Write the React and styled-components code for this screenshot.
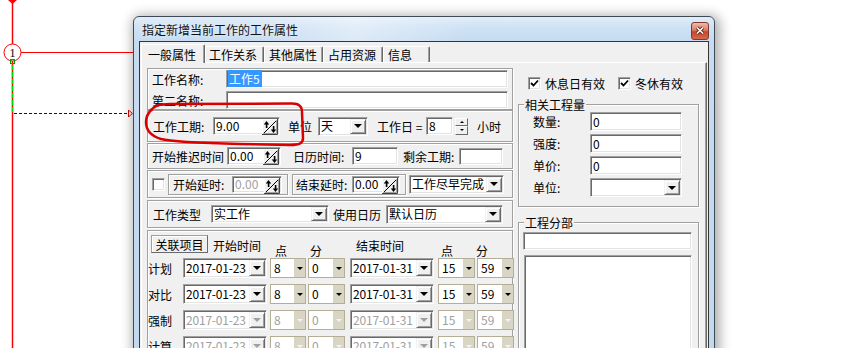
import React from 'react'
import styled, { createGlobalStyle } from 'styled-components'

const GlobalStyle = createGlobalStyle`
  body {
    margin: 0;
    background: #fff;
    overflow: hidden;
  }
  * {
    box-sizing: border-box;
  }
`

const Desktop = styled.div`
  position: relative;
  width: 847px;
  height: 348px;
  overflow: hidden;
  background: #fff;
  font-family: "Noto Sans CJK SC", "Noto Sans", sans-serif;
  font-size: 12px;
  color: #000;
`

const Canvas = styled.svg`
  position: absolute;
  left: 0;
  top: 0;
  z-index: ${p => p.$z};
  pointer-events: none;
`

const Window = styled.div`
  position: absolute;
  left: 133px;
  top: 16px;
  width: 582px;
  height: 360px;
  z-index: 2;
  display: flex;
  flex-direction: column;
  padding: 0 5px;
  border: 1px solid #3f4a57;
  border-radius: 6px 6px 0 0;
  background: linear-gradient(to bottom, #e2edf9 0px, #cfe2f5 10px, #c6dbf1 24px, #c2d8ef 100%);
  box-shadow: 2px 2px 12px 3px rgba(0, 0, 0, 0.32);
`

const TitleBar = styled.div`
  height: 24px;
  display: flex;
  align-items: center;
  justify-content: space-between;
  padding-left: 3px;
  background: linear-gradient(100deg, transparent 20%, rgba(255, 255, 255, 0.4) 38%, transparent 58%);
`

const TitleText = styled.span`
  line-height: 15px;
  color: #111;
  text-shadow: 0 0 5px rgba(255, 255, 255, 0.9);
`

const CloseBtn = styled.div`
  width: 18px;
  height: 18px;
  margin-top: 3px;
  border: 1px solid #7e3a2c;
  border-radius: 3px;
  background: linear-gradient(to bottom, #eeb9aa 0%, #dc7c64 45%, #c8452b 55%, #d56a4c 100%);
  display: flex;
  align-items: center;
  justify-content: center;
`

const Client = styled.div`
  flex: 1;
  display: flex;
  flex-direction: column;
  padding: 2px 1px 0;
  border: 1px solid #353535;
  background: #f0f0f0;
`

const TabStrip = styled.div`
  height: 18px;
  display: flex;
  align-items: flex-end;
`

const Tab = styled.div`
  position: relative;
  z-index: ${p => (p.$active ? 3 : 1)};
  width: ${p => p.$w}px;
  height: ${p => (p.$active ? 19 : 16)}px;
  margin-bottom: ${p => (p.$active ? -1 : 0)}px;
  padding-left: ${p => p.$pl}px;
  display: flex;
  align-items: center;
  line-height: 15px;
  background: #f0f0f0;
  border: 1px solid;
  border-bottom: none;
  border-color: #fff #696969 transparent #fff;
  box-shadow: inset -1px 0 0 #a0a0a0;
  border-radius: 2px 2px 0 0;
`

const Panel = styled.div`
  position: relative;
  z-index: 2;
  flex: 1;
  display: flex;
  gap: 5px;
  padding: 5px 0 0 5px;
  border-top: 1px solid #fff;
  border-left: 1px solid #fff;
  border-right: 1px solid #696969;
  box-shadow: inset -1px 0 0 #a0a0a0;
`

const LeftCol = styled.div`
  width: 366px;
  display: flex;
  flex-direction: column;
`

const RightCol = styled.div`
  width: 181px;
  display: flex;
  flex-direction: column;
`

const Box = styled.div`
  flex-shrink: 0;
  height: ${p => (p.$h ? p.$h + 'px' : 'auto')};
  flex-grow: ${p => (p.$grow ? 1 : 0)};
  margin-bottom: ${p => p.$mb || 0}px;
  padding: ${p => p.$pad || '0 0 0 5px'};
  display: flex;
  flex-direction: ${p => (p.$col ? 'column' : 'row')};
  align-items: ${p => (p.$col ? 'stretch' : 'center')};
  gap: ${p => p.$gap || 0}px;
  border: 1px solid #a0a0a0;
  box-shadow: inset 1px 1px 0 #fff, 1px 1px 0 #fff;
`

const SubBox = styled.div`
  flex-shrink: 0;
  width: ${p => p.$w}px;
  height: 21px;
  margin-left: ${p => p.$ml || 0}px;
  padding-left: ${p => p.$pl}px;
  display: flex;
  align-items: center;
  border: 1px solid #a0a0a0;
  box-shadow: inset 1px 1px 0 #fff, 1px 1px 0 #fff;
`

const Row = styled.div`
  height: ${p => p.$h}px;
  display: flex;
  align-items: ${p => p.$align || 'center'};
`

const Text = styled.span`
  flex-shrink: 0;
  width: ${p => (p.$w ? p.$w + 'px' : 'auto')};
  margin-left: ${p => p.$ml || 0}px;
  margin-top: ${p => p.$mt || 0}px;
  line-height: 15px;
  white-space: nowrap;
`

const Field = styled.div`
  flex-shrink: 0;
  width: ${p => p.$w}px;
  height: ${p => p.$h || 18}px;
  margin-left: ${p => p.$ml || 0}px;
  margin-top: ${p => p.$mt || 0}px;
  display: flex;
  padding: 1px;
  background: #fff;
  border: 1px solid;
  border-color: #a0a0a0 #fff #fff #a0a0a0;
  box-shadow: inset 1px 1px 0 #696969, inset -1px -1px 0 #e3e3e3;
  color: ${p => (p.$disabled ? '#a0a0a0' : '#000')};
`

const Value = styled.span`
  flex: 1;
  min-width: 0;
  align-self: center;
  padding-left: ${p => (p.$pl === undefined ? 1 : p.$pl)}px;
  line-height: 14px;
  white-space: nowrap;
  letter-spacing: ${p => (p.$tight ? '-0.2px' : 'normal')};
`

const Selected = styled.span`
  background: #3399ff;
  color: #fff;
  padding: 0 2px 0 1px;
`

const DropBtn = styled.div`
  flex-shrink: 0;
  width: 16px;
  display: flex;
  align-items: center;
  justify-content: center;
  background: #f0f0f0;
  border: 1px solid;
  border-color: #f0f0f0 #696969 #696969 #f0f0f0;
  box-shadow: inset 1px 1px 0 #fff, inset -1px -1px 0 #a0a0a0;

  &::after {
    content: '';
    border-left: 4px solid transparent;
    border-right: 4px solid transparent;
    border-top: 4px solid ${p => (p.$disabled ? '#a0a0a0' : '#000')};
  }
`

const TanCombo = styled.div`
  flex-shrink: 0;
  width: ${p => p.$w}px;
  height: 20px;
  margin-left: ${p => p.$ml || 0}px;
  display: flex;
  background: #fff;
  border: 1px solid #b5ae97;
  color: ${p => (p.$disabled ? '#a0a0a0' : '#000')};
`

const TanBtn = styled.div`
  flex-shrink: 0;
  width: 11px;
  display: flex;
  align-items: center;
  justify-content: center;
  background: #d9d5c5;

  &::after {
    content: '';
    border-left: 3px solid transparent;
    border-right: 3px solid transparent;
    border-top: 3px solid ${p => (p.$disabled ? '#f4f4f4' : '#000')};
  }
`

const UpDown = styled.div`
  flex-shrink: 0;
  width: 13px;
  height: 17px;
  margin-left: 2px;
  display: flex;
  flex-direction: column;
`

const UpDownBtn = styled.div`
  flex: 1;
  display: flex;
  align-items: center;
  justify-content: center;
  background: #f0f0f0;
  border: 1px solid;
  border-color: #fff #696969 #696969 #fff;

  &::after {
    content: '';
    border-left: 2px solid transparent;
    border-right: 2px solid transparent;
    ${p => (p.$up ? 'border-bottom' : 'border-top')}: 2px solid #000;
  }
`

const Check = styled.div`
  flex-shrink: 0;
  width: 13px;
  height: 13px;
  margin-left: ${p => p.$ml || 0}px;
  display: flex;
  align-items: center;
  justify-content: center;
  background: #fff;
  border: 1px solid;
  border-color: #a0a0a0 #fff #fff #a0a0a0;
  box-shadow: inset 1px 1px 0 #696969, inset -1px -1px 0 #e3e3e3;
`

const Button = styled.div`
  flex-shrink: 0;
  width: 57px;
  height: 18px;
  margin-left: 3px;
  display: flex;
  align-items: center;
  justify-content: center;
  line-height: 15px;
  background: #f0f0f0;
  border: 1px solid;
  border-color: #a0a0a0 #696969 #696969 #a0a0a0;
  box-shadow: inset 1px 1px 0 #fff;
`

const CheckRow = styled.div`
  height: 15px;
  margin-top: 8px;
  padding-left: 10px;
  display: flex;
  align-items: center;
`

const Group = styled.div`
  position: relative;
  flex-shrink: 0;
  height: ${p => (p.$h ? p.$h + 'px' : 'auto')};
  flex-grow: ${p => (p.$grow ? 1 : 0)};
  margin-top: ${p => p.$mt}px;
  padding: ${p => p.$pad};
  display: flex;
  flex-direction: column;
  border: 1px solid #a0a0a0;
  box-shadow: inset 1px 1px 0 #fff, 1px 1px 0 #fff;
`

const Legend = styled.span`
  position: absolute;
  left: 5px;
  top: -8px;
  padding: 0 1px;
  line-height: 15px;
  background: #f0f0f0;
`

const QtyGrid = styled.div`
  display: grid;
  grid-template-columns: 57px 92px;
  grid-auto-rows: 19px;
  row-gap: 3px;
  align-items: center;
`

const ListBox = styled.div`
  flex: 1;
  width: 168px;
  margin: 5px 0 0 1px;
  background: #fff;
  border: 1px solid;
  border-color: #a0a0a0 #fff #fff #a0a0a0;
  box-shadow: inset 1px 1px 0 #696969, inset -1px -1px 0 #e3e3e3;
`

const Schedule = styled.div`
  display: flex;
  flex-direction: column;
  gap: 6px;
`

const SpinIcon = () => (
  <svg width='16' height='16' viewBox='0 0 16 16'>
    <rect width='16' height='16' fill='#f0f0f0' />
    <path d='M0.5 16V0.5H16' stroke='#fff' fill='none' />
    <path d='M15.5 0V15.5H0' stroke='#404040' fill='none' />
    <path d='M14.5 1V14.5H1' stroke='#a0a0a0' fill='none' />
    <path d='M2 14L14 2' stroke='#000' />
    <path d='M4.5 2L1.8 5.5H7.2Z' fill='#000' />
    <rect x='3.8' y='5' width='1.6' height='4' fill='#000' />
    <path d='M11.5 14L8.8 10.5H14.2Z' fill='#000' />
    <rect x='10.8' y='7' width='1.6' height='4' fill='#000' />
  </svg>
)

const SpinField = ({ w, h, value, disabled, ml }) => (
  <Field $w={w} $h={h || 18} $ml={ml} $disabled={disabled}>
    <Value>{value}</Value>
    <SpinIcon />
  </Field>
)

const Combo = ({ w, h, value, disabled, ml, tight }) => (
  <Field $w={w} $h={h || 19} $ml={ml} $disabled={disabled}>
    <Value $tight={tight}>{value}</Value>
    <DropBtn $disabled={disabled} />
  </Field>
)

const SmallCombo = ({ w, value, disabled, ml }) => (
  <TanCombo $w={w} $ml={ml} $disabled={disabled}>
    <Value $pl={3}>{value}</Value>
    <TanBtn $disabled={disabled} />
  </TanCombo>
)

const CheckMark = () => (
  <svg width='9' height='9' viewBox='0 0 9 9'>
    <path d='M1 4L3.5 6.5L8 1.5' stroke='#000' strokeWidth='1.8' fill='none' />
  </svg>
)

const tabs = [
  { label: '一般属性', w: 64, pl: 6, active: true },
  { label: '工作关系', w: 59, pl: 3 },
  { label: '其他属性', w: 59, pl: 4 },
  { label: '占用资源', w: 60, pl: 4 },
  { label: '信息', w: 47, pl: 4 }
]

const plans = [
  { name: '计划', start: '2017-01-23', end: '2017-01-31' },
  { name: '对比', start: '2017-01-23', end: '2017-01-31' },
  { name: '强制', start: '2017-01-23', end: '2017-01-31', disabled: true },
  { name: '计算', start: '2017-01-23', end: '2017-01-31', disabled: true }
]

export default function App () {
  return (
    <>
      <GlobalStyle />
      <Desktop>
        <Canvas $z={1} width='847' height='348' viewBox='0 0 847 348'>
          <path d='M12.5 0V44M12.5 61V348' stroke='#f00' strokeWidth='1.5' />
          <path d='M8 0H17L12.5 4Z' fill='#f00' />
          <line x1='21' y1='52.5' x2='134' y2='52.5' stroke='#f00' />
          <circle cx='12.5' cy='52.5' r='8.5' fill='#fff' stroke='#f00' />
          <text x='12.5' y='56.5' textAnchor='middle' fontSize='12' fontFamily='Liberation Serif, serif'>1</text>
          <line x1='12.5' y1='65' x2='12.5' y2='113' stroke='#00e000' strokeWidth='1.5' strokeDasharray='5 2' />
          <rect x='10.5' y='59.5' width='4' height='4' fill='none' stroke='#00a000' />
          <line x1='14' y1='113.5' x2='127' y2='113.5' stroke='#0000c8' strokeDasharray='3 2' />
          <path d='M128.5 110V117M129 110.5L132.5 113.5L129 116.5' stroke='#e00000' fill='none' />
        </Canvas>

        <Window>
          <TitleBar>
            <TitleText>指定新增当前工作的工作属性</TitleText>
            <CloseBtn>
              <svg width='10' height='9' viewBox='0 0 10 9'>
                <path d='M2 1.5L8 7.5M8 1.5L2 7.5' stroke='#5a2418' strokeWidth='3.2' />
                <path d='M2 1.5L8 7.5M8 1.5L2 7.5' stroke='#fff' strokeWidth='1.6' />
              </svg>
            </CloseBtn>
          </TitleBar>

          <Client>
            <TabStrip>
              {tabs.map(t => (
                <Tab key={t.label} $w={t.w} $pl={t.pl} $active={t.active}>{t.label}</Tab>
              ))}
            </TabStrip>

            <Panel>
              <LeftCol>
                <Box $h={42} $col $pad='1px 0 0 4px' $gap={3}>
                  <Row $h={18}>
                    <Text $w={74}>工作名称:</Text>
                    <Field $w={282}><Value $pl={0}><Selected>工作5</Selected></Value></Field>
                  </Row>
                  <Row $h={18}>
                    <Text $w={74}>第二名称:</Text>
                    <Field $w={282} />
                  </Row>
                </Box>

                <Box $h={32} $mb={1}>
                  <Text $w={60}>工作工期:</Text>
                  <SpinField w={67} value='9.00' />
                  <Text $w={30} $ml={8}>单位</Text>
                  <Combo w={50} value='天' />
                  <Text $w={49} $ml={9}>工作日 =</Text>
                  <Field $w={27}><Value>8</Value></Field>
                  <UpDown>
                    <UpDownBtn $up />
                    <UpDownBtn />
                  </UpDown>
                  <Text $ml={9}>小时</Text>
                </Box>

                <Box $h={26} $mb={1} $pad='0 0 0 4px'>
                  <Text $w={75}>开始推迟时间</Text>
                  <SpinField w={54} value='0.00' />
                  <Text $w={59} $ml={12}>日历时间:</Text>
                  <Field $w={46}><Value>9</Value></Field>
                  <Text $w={56} $ml={5}>剩余工期:</Text>
                  <Field $w={44} $h={17} />
                </Box>

                <Box $h={28} $mb={2} $pad='0 0 0 4px'>
                  <Check />
                  <SubBox $w={120} $ml={3} $pl={4}>
                    <Text $w={59}>开始延时:</Text>
                    <SpinField w={50} h={17} value='0.00' disabled />
                  </SubBox>
                  <SubBox $w={114} $ml={4} $pl={3}>
                    <Text $w={56}>结束延时:</Text>
                    <SpinField w={48} h={17} value='0.00' />
                  </SubBox>
                  <Combo w={95} ml={3} value='工作尽早完成' />
                </Box>

                <Box $h={28} $mb={2}>
                  <Text $w={58}>工作类型</Text>
                  <Combo w={118} h={18} value='实工作' />
                  <Text $w={53} $ml={4}>使用日历</Text>
                  <Combo w={117} value='默认日历' />
                </Box>

                <Box $grow $col $pad='4px 0 0 0' $gap={5}>
                  <Row $h={18} $align='flex-start'>
                    <Button>关联项目</Button>
                    <Text $w={48} $ml={5} $mt={3}>开始时间</Text>
                    <Text $w={12} $ml={14} $mt={8}>点</Text>
                    <Text $w={12} $ml={23} $mt={8}>分</Text>
                    <Text $w={48} $ml={34} $mt={3}>结束时间</Text>
                    <Text $w={12} $ml={37} $mt={8}>点</Text>
                    <Text $w={12} $ml={23} $mt={8}>分</Text>
                  </Row>
                  <Schedule>
                    {plans.map(p => (
                      <Row key={p.name} $h={20}>
                        <Text $w={35}>{p.name}</Text>
                        <Combo w={84} h={20} tight value={p.start} disabled={p.disabled} />
                        <SmallCombo w={36} ml={3} value='8' disabled={p.disabled} />
                        <SmallCombo w={37} ml={2} value='0' disabled={p.disabled} />
                        <Combo w={84} h={20} ml={5} tight value={p.end} disabled={p.disabled} />
                        <SmallCombo w={37} ml={4} value='15' disabled={p.disabled} />
                        <SmallCombo w={37} ml={2} value='59' disabled={p.disabled} />
                      </Row>
                    ))}
                  </Schedule>
                </Box>
              </LeftCol>

              <RightCol>
                <CheckRow>
                  <Check><CheckMark /></Check>
                  <Text $ml={4}>休息日有效</Text>
                  <Check $ml={13}><CheckMark /></Check>
                  <Text $ml={4}>冬休有效</Text>
                </CheckRow>

                <Group $mt={13} $h={103} $pad='7px 0 0 14px'>
                  <Legend>相关工程量</Legend>
                  <QtyGrid>
                    <Text>数量:</Text>
                    <Field $w={92} $h={19}><Value>0</Value></Field>
                    <Text>强度:</Text>
                    <Field $w={92} $h={19}><Value>0</Value></Field>
                    <Text>单价:</Text>
                    <Field $w={92} $h={19}><Value>0</Value></Field>
                    <Text>单位:</Text>
                    <Combo w={92} h={19} value='' />
                  </QtyGrid>
                </Group>

                <Group $mt={15} $grow $pad='9px 0 0 4px'>
                  <Legend>工程分部</Legend>
                  <Field $w={169} $h={18} />
                  <ListBox />
                </Group>
              </RightCol>
            </Panel>
          </Client>
        </Window>

        <Canvas $z={3} width='847' height='348' viewBox='0 0 847 348'>
          <path
            d='M151 111C153 106 159 104 170 104L292 103.5C299 103.5 302 106 302 112L303 138C303 143 300 145 290 145L240 144C200 143 172 142 161 139C151 136 146 130 146 122C146 117 148 113 152 109'
            stroke='#d80000'
            strokeWidth='2.5'
            fill='none'
          />
        </Canvas>
      </Desktop>
    </>
  )
}
